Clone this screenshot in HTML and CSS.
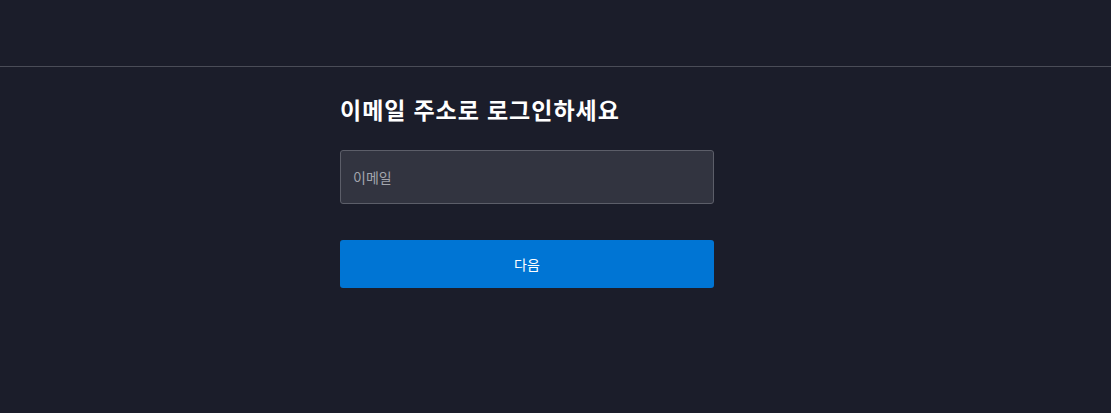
FILE: index.html
```html
<!doctype html>
<html lang="ko">
<head>
<meta charset="utf-8">
<title>로그인</title>
<meta name="viewport" content="width=device-width,initial-scale=1">
<link rel="stylesheet" href="styles.css">
</head>
<body>

<header class="topbar"></header>

<main class="login">
  <h1 class="login-title">이메일 주소로 로그인하세요</h1>
  <form class="login-form" onsubmit="return false">
    <input class="field" type="email" placeholder="이메일" autofocus>
    <button class="next" type="submit">다음</button>
  </form>
</main>

</body>
</html>
```

FILE: styles.css
```css
*{box-sizing:border-box;margin:0;padding:0}
html,body{
  height:100%;
  font-family:"Noto Sans","Noto Sans CJK KR",sans-serif;
  background:#1b1d2a;
  color:#fff;
  overflow:hidden;
}

/* top bar */
.topbar{
  height:67px;
  border-bottom:1px solid #4a4c57;
}

/* login block */
.login{
  width:374px;
  margin-left:340px;
  padding-top:28px;
}
.login-title{
  font-size:23px;
  font-weight:700;
  letter-spacing:1px;
  line-height:30px;
  margin-bottom:25px;
}
.login-form{
  display:flex;
  flex-direction:column;
  gap:36px;
}
.field{
  height:54px;
  padding:0 12px;
  font:14px "Noto Sans","Noto Sans CJK KR",sans-serif;
  color:#fff;
  caret-color:#3fd4e0;
  background:#323440;
  border:1px solid #5c5e69;
  border-radius:3px;
  outline:none;
}
.field::placeholder{color:#a3a5ad}
.next{
  height:48px;
  font:14px "Noto Sans","Noto Sans CJK KR",sans-serif;
  color:#fff;
  background:#0075d4;
  border:none;
  border-radius:3px;
  cursor:pointer;
}
.next:hover{background:#0a82e6}
```
